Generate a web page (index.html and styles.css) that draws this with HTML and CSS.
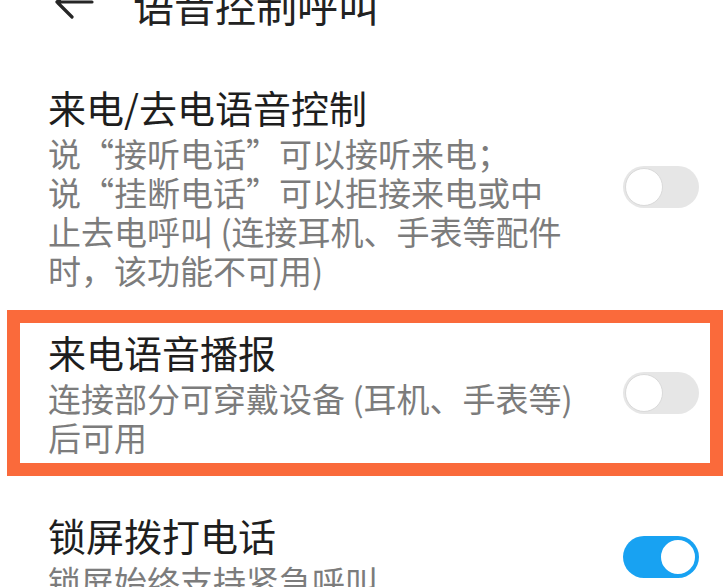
FILE: index.html
```html
<!DOCTYPE html>
<html lang="zh-CN">
<head>
<meta charset="utf-8">
<title>语音控制呼叫</title>
<link rel="stylesheet" href="styles.css">
</head>
<body>
<header class="topbar">
  <svg class="back" width="40" height="40" viewBox="0 0 40 40" aria-hidden="true">
    <path d="M2 18 H37 M2 18 L17 3 M2 18 L17 33" fill="none" stroke="#262626" stroke-width="3.2" stroke-linecap="round" stroke-linejoin="round"/>
  </svg>
  <h1 class="page-title">语音控制呼叫</h1>
</header>
<main class="list">
  <section class="row row-first">
    <div class="text">
      <div class="title">来电/去电语音控制</div>
      <div class="desc">说“接听电话”可以接听来电；<br>说“挂断电话”可以拒接来电或中<br>止去电呼叫 (连接耳机、手表等配件<br>时，该功能不可用)</div>
    </div>
    <span class="switch"><span class="knob"></span></span>
  </section>
  <section class="highlight">
    <div class="row row-inner">
      <div class="text">
        <div class="title">来电语音播报</div>
        <div class="desc">连接部分可穿戴设备 (耳机、手表等)<br>后可用</div>
      </div>
      <span class="switch"><span class="knob"></span></span>
    </div>
  </section>
  <section class="row row-last">
    <div class="text">
      <div class="title">锁屏拨打电话</div>
      <div class="desc">锁屏始终支持紧急呼叫</div>
    </div>
    <span class="switch on"><span class="knob"></span></span>
  </section>
</main>
</body>
</html>
```
FILE: styles.css
```css
html, body {
  margin: 0;
  padding: 0;
  background: #ffffff;
  font-family: "Noto Sans CJK SC", "Noto Sans", sans-serif;
  overflow: hidden;
  height: 587px;
}

.topbar {
  display: flex;
  align-items: center;
  height: 40px;
  margin-top: -16px;
  padding-left: 55px;
}

.back {
  flex: none;
  display: block;
}

.page-title {
  margin: 0 0 0 38px;
  font-size: 41px;
  line-height: 40px;
  font-weight: 400;
  color: #222222;
}

.list {
  display: flex;
  flex-direction: column;
}

.row {
  display: flex;
  align-items: center;
}

.row-first {
  padding-left: 48px;
  margin-top: 60px;
}

.text {
  width: 532px;
  flex: none;
}

.title {
  font-size: 38px;
  line-height: 46px;
  color: #1e1e1e;
  white-space: nowrap;
}

.desc {
  margin-top: 4px;
  font-size: 33px;
  line-height: 39px;
  color: #7c7c7c;
  white-space: nowrap;
}

.switch {
  flex: none;
  position: relative;
  width: 76px;
  height: 42px;
  margin-left: 43px;
  border-radius: 21px;
  background: #e6e6e6;
  box-sizing: border-box;
}

.knob {
  position: absolute;
  top: 2px;
  left: 2px;
  width: 38px;
  height: 38px;
  border-radius: 50%;
  background: #ffffff;
  border: 1px solid #dadada;
  box-sizing: border-box;
}

.switch.on {
  background: #18a2f2;
}

.switch.on .knob {
  left: auto;
  right: 2px;
  border: 2px solid #18a2f2;
}

.highlight {
  margin: 20px 2px 0 7px;
  border: 13px solid #fa6a3b;
  padding: 6px 0 6px 28px;
}

.row-last {
  padding-left: 48px;
  margin-top: 36px;
}
```
